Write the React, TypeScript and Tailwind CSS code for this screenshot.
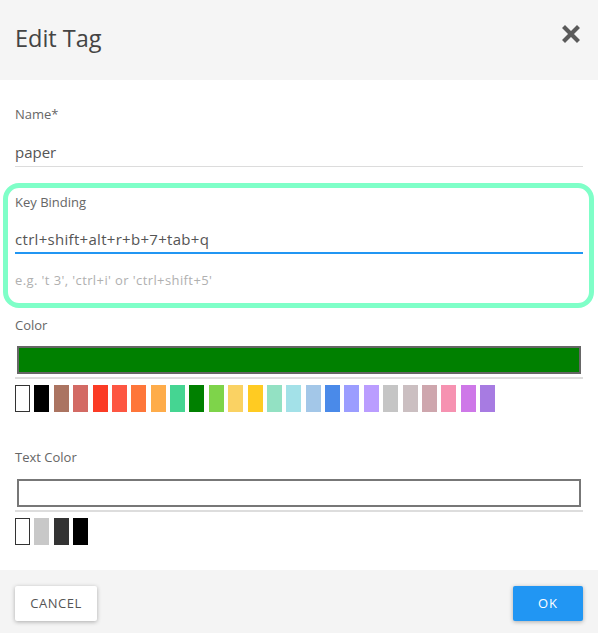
import React from "react";

const colors = [
  "#ffffff", "#000000", "#ab7461", "#d36a64", "#fb3b25", "#fd5642", "#fe763a", "#feac4a",
  "#45d592", "#008000", "#7ed44a", "#fad263", "#ffcb22", "#93e1c3", "#a3e1e8", "#a3c7e8",
  "#4a8ae9", "#9b9dff", "#ba9dff", "#c5c5c5", "#cbbfc1", "#cea6ad", "#f692b1", "#ce78e8", "#a77be2",
];
const textColors = ["#ffffff", "#c8c8c8", "#333333", "#000000"];

function Swatches({ list }: { list: string[] }) {
  return (
    <div className="flex gap-[4.375px] h-[27px]">
      {list.map((c, i) => (
        <div
          key={i}
          className={"w-[15px] h-[27px] " + (c === "#ffffff" ? "border border-[#333]" : "")}
          style={{ backgroundColor: c }}
        />
      ))}
    </div>
  );
}

export default function App() {
  return (
    <div className="w-[598px] h-[633px] bg-white flex flex-col text-[#555]" style={{ fontFamily: '"Open Sans", "Noto Sans", sans-serif' }}>
      <div className="h-[80px] bg-[#f5f5f5] flex items-center justify-between pl-[15px] pr-[18px] shrink-0">
        <div className="text-[23.5px] text-[#444] leading-none pb-[2px]">Edit Tag</div>
        <svg width="18" height="18" viewBox="0 0 18 18" className="mb-[12px]">
          <path d="M3 3 L15 15 M15 3 L3 15" stroke="#5a5a5a" strokeWidth="4.2" strokeLinecap="square" />
        </svg>
      </div>
      <div className="flex-1 flex flex-col">
        <div className="px-[15px]">
          <div className="pt-[26px] h-[42px] text-[13px] leading-[16px] text-[#666]">Name*</div>
          <div className="h-[45px] pt-[20px] text-[15px] leading-[20px] text-[#555] border-b border-[#dcdcdc]">paper</div>
        </div>
        <div className="mt-[16px] ml-[3px] mr-[4px] h-[125px] border-[5px] border-[#7fffc8] rounded-[16px] pl-[7px] pr-[6px] pt-[6px]">
          <div className="h-[16px] text-[13px] leading-[16px] text-[#666]">Key Binding</div>
          <div className="mt-[19px] h-[25px] text-[15px] leading-[20px] text-[#555] tracking-[0.3px] border-b-2 border-[#2196f3]">ctrl+shift+alt+r+b+7+tab+q</div>
          <div className="mt-[18px] text-[13px] leading-[16px] tracking-[0.4px] text-[#b0b0b0]">e.g. 't 3', 'ctrl+i' or 'ctrl+shift+5'</div>
        </div>
        <div className="px-[15px]">
          <div className="pt-[9px] h-[38px] text-[13px] leading-[16px] text-[#666]">Color</div>
          <div className="pb-[3px] border-b-2 border-[#dddddd] px-[2px]">
            <div className="h-[28px] bg-[#008000] border-2 border-[#666]" />
          </div>
          <div className="mt-[6px]">
            <Swatches list={colors} />
          </div>
          <div className="pt-[37px] h-[71px] text-[13px] leading-[16px] text-[#666]">Text Color</div>
          <div className="mt-[-4px] pb-[3px] border-b-2 border-[#dddddd] px-[2px]">
            <div className="h-[28px] bg-white border-2 border-[#777]" />
          </div>
          <div className="mt-[6px]">
            <Swatches list={textColors} />
          </div>
        </div>
      </div>
      <div className="h-[63px] bg-[#f4f4f4] flex items-start justify-between px-[15px] pt-[16px] shrink-0">
        <button className="w-[82px] h-[35px] bg-white rounded-[2px] text-[13px] text-[#555] tracking-[0.5px] shadow-[0_1px_4px_rgba(0,0,0,0.3)]">CANCEL</button>
        <button className="w-[70px] h-[35px] bg-[#2196f3] rounded-[2px] text-[13px] text-white tracking-[1px] shadow-[0_1px_4px_rgba(0,0,0,0.3)]">OK</button>
      </div>
    </div>
  );
}
